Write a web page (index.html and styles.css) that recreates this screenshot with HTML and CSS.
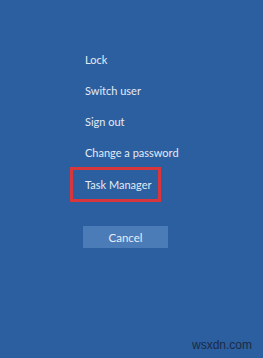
FILE: index.html
```html
<!DOCTYPE html>
<html lang="en">
<head>
  <meta charset="UTF-8" />
  <title>Security Options</title>
  <link rel="stylesheet" href="styles.css">
</head>
<body>
  <div class="screen">
    <ul class="options">
      <li>Lock</li>
      <li>Switch user</li>
      <li>Sign out</li>
      <li>Change a password</li>
      <li class="highlight">Task Manager</li>
    </ul>
    <button class="cancel">Cancel</button>
    <span class="watermark">wsxdn.com</span>
  </div>
</body>
</html>
```

FILE: styles.css
```css
body { margin: 0; background: #2c5f9f; font-family: Lato, "Open Sans", sans-serif; }
.screen {
  position: relative;
  width: 263px;
  height: 358px;
  padding: 44px 0 0 85px;
  box-sizing: border-box;
}
.options {
  list-style: none;
  margin: 0;
  padding: 0;
  display: flex;
  flex-direction: column;
  align-items: flex-start;
}
.options li {
  height: 31px;
  line-height: 31px;
  font-size: 11px;
  color: #e3ebf6;
}
.options li.highlight {
  width: 91px;
  height: 35px;
  line-height: 29px;
  box-sizing: border-box;
  border: 3px solid #d7363d;
  margin: -1px 0 0 -15px;
  padding-left: 12px;
}
.cancel {
  display: block;
  margin: 24px 0 0 -2px;
  width: 85px;
  height: 22px;
  background: #4c7cb8;
  color: #e6eef8;
  border: none;
  padding: 0;
  font-family: inherit;
  font-size: 11.5px;
}
.watermark {
  position: absolute;
  right: 11px;
  bottom: 6px;
  font-family: "Liberation Sans", Arial, sans-serif;
  font-size: 12px;
  color: #1b2a44;
}
```
